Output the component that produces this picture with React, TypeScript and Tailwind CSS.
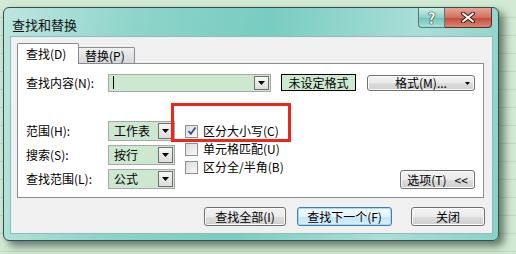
import React from 'react'

const Caret = () => (
  <svg width="7" height="4" viewBox="0 0 7 4">
    <path d="M0 0h7L3.5 4z" fill="#000" />
  </svg>
)

function Combo({ value, className }: { value: string; className: string }) {
  return (
    <div className={`flex h-[20px] border border-[#a8a8a8] bg-[#cce8cf] ${className}`}>
      <div className="flex-1 flex items-center pl-[5px] text-[12px] leading-none text-black">{value}</div>
      <div className="w-[15px] my-[1px] mr-[1px] border border-[#707070] bg-[linear-gradient(to_bottom,#f7f7f7,#dcdcdc)] flex items-center justify-center">
        <Caret />
      </div>
    </div>
  )
}

function Check({ label, checked }: { label: string; checked?: boolean }) {
  return (
    <div className="flex items-center h-[18px] gap-[5px]">
      <div className="w-[13px] h-[13px] border border-[#8f8f8f] bg-[linear-gradient(135deg,#dcdcdc,#f8f8f8)] flex items-center justify-center">
        {checked && (
          <svg width="10" height="10" viewBox="0 0 10 10">
            <path d="M1.5 5.2 L3.8 7.8 L8.5 1.5" stroke="#3a4f9a" strokeWidth="1.8" fill="none" />
          </svg>
        )}
      </div>
      <span className="text-[12px] leading-none text-black">{label}</span>
    </div>
  )
}

function Button({ label, className, focus }: { label: React.ReactNode; className: string; focus?: boolean }) {
  return (
    <div
      className={`flex items-center justify-center rounded-[3px] border text-[12px] leading-none text-black ${
        focus
          ? 'border-[#3c7fb1] shadow-[inset_0_0_0_1px_#a6dcf5] bg-[linear-gradient(to_bottom,#f4fafd_0%,#e5f3fb_50%,#c4e5f6_51%,#d8eef9_100%)]'
          : 'border-[#707070] shadow-[inset_0_0_0_1px_#fcfcfc] bg-[linear-gradient(to_bottom,#f2f2f2_0%,#ebebeb_50%,#dddddd_51%,#cfcfcf_100%)]'
      } ${className}`}
    >
      {label}
    </div>
  )
}

export default function App() {
  return (
    <div className="w-[516px] h-[254px] overflow-hidden pl-[3px] pt-[7px] bg-[repeating-linear-gradient(to_bottom,#d2e9d3_0px,#d2e9d3_17px,#bcd8be_17px,#bcd8be_18px)] font-['Noto_Sans_CJK_SC',sans-serif]">
      <div className="w-[496px] h-[234px] rounded-[6px] border border-[#34504c] shadow-[5px_5px_8px_rgba(20,40,30,0.6)] bg-[linear-gradient(100deg,#bde6e0_0%,#8ed4ca_25%,#78ccc1_50%,#a9ded7_78%,#88d2c8_100%)] flex flex-col">
        {/* title bar */}
        <div className="h-[28px] flex items-start shrink-0">
          <div className="pl-[8px] pt-[10px] text-[13px] leading-none text-[#111]">查找和替换</div>
          <div className="ml-auto mr-[6px] flex">
            <div className="w-[27px] h-[20px] rounded-bl-[4px] border border-t-0 border-[#4f7a75] bg-[linear-gradient(to_bottom,#cdeee9,#8fd1c8_50%,#6fc3b8_51%,#a6e0d8)] flex items-center justify-center">
              <span className="text-[15px] font-bold leading-none text-white [text-shadow:0_0_1px_#222,0_0_1px_#222,0_0_1px_#222]">?</span>
            </div>
            <div className="w-[47px] h-[20px] rounded-br-[4px] border border-l-0 border-t-0 border-[#5e2a24] bg-[linear-gradient(to_bottom,#e8a597,#d2705f_50%,#c24a36_51%,#d98676)] flex items-center justify-center">
              <svg width="14" height="11" viewBox="0 0 14 11">
                <path d="M2 1.5 L12 9.5 M12 1.5 L2 9.5" stroke="#3b1a16" strokeWidth="4" strokeLinecap="round" />
                <path d="M2 1.5 L12 9.5 M12 1.5 L2 9.5" stroke="#fff" strokeWidth="2" strokeLinecap="round" />
              </svg>
            </div>
          </div>
        </div>

        {/* client area */}
        <div className="flex-1 ml-[6px] mr-[5px] mb-[6px] border border-[#8cbcb6] bg-[#f0f0f0] flex flex-col px-[6px] pt-[6px]">
          {/* tabs */}
          <div className="flex items-end h-[20px] relative z-10">
            <div className="w-[62px] h-[21px] -mb-px border border-b-0 border-[#898c95] rounded-t-[2px] bg-white flex items-center pl-[8px] text-[12px] leading-none text-black">
              查找(D)
            </div>
            <div className="w-[56px] h-[16px] border border-l-0 border-b-0 border-[#898c95] rounded-tr-[2px] bg-[linear-gradient(to_bottom,#f0f0f0,#d8d8d8)] flex items-center pl-[6px] text-[12px] leading-none text-black">
              替换(P)
            </div>
          </div>

          {/* panel */}
          <div className="relative h-[135px] w-[467px] border border-[#898c95] bg-white pl-[8px] pr-[8px] pt-[10px]">
            <div className="flex items-center h-[17px]">
              <span className="w-[82px] text-[12px] leading-none text-black">查找内容(N):</span>
              <div className="flex w-[163px] h-[18px] border border-[#a8a8a8] bg-[#cce8cf]">
                <div className="flex-1 flex items-center pl-[4px]">
                  <div className="w-px h-[13px] bg-black" />
                </div>
                <div className="w-[15px] my-[1px] mr-[1px] border border-[#707070] bg-[linear-gradient(to_bottom,#f7f7f7,#dcdcdc)] flex items-center justify-center">
                  <Caret />
                </div>
              </div>
              <div className="ml-[10px] w-[75px] h-[17px] border border-black bg-[#cce8cf] flex items-center justify-center text-[12px] leading-none text-black">
                未设定格式
              </div>
              <Button
                className="ml-[11px] w-[108px] h-[16px] relative"
                label={
                  <>
                    <span>格式(M)...</span>
                    <span className="absolute right-[4px] top-[6px]">
                      <svg width="5" height="3" viewBox="0 0 5 3"><path d="M0 0h5L2.5 3z" fill="#000" /></svg>
                    </span>
                  </>
                }
              />
            </div>

            <div className="flex mt-[30px]">
              <div className="flex flex-col gap-[4px]">
                <div className="flex items-center">
                  <span className="w-[82px] text-[12px] leading-none text-black">范围(H):</span>
                  <Combo value="工作表" className="w-[67px]" />
                </div>
                <div className="flex items-center">
                  <span className="w-[82px] text-[12px] leading-none text-black">搜索(S):</span>
                  <Combo value="按行" className="w-[67px]" />
                </div>
                <div className="flex items-center">
                  <span className="w-[82px] text-[12px] leading-none text-black">查找范围(L):</span>
                  <Combo value="公式" className="w-[67px]" />
                </div>
              </div>
              <div className="ml-[10px] pt-[1px] flex flex-col">
                <Check label="区分大小写(C)" checked />
                <Check label="单元格匹配(U)" />
                <Check label="区分全/半角(B)" />
              </div>
              <div className="ml-auto flex items-end">
                <Button className="w-[75px] h-[19px] gap-[8px]" label={<><span>选项(T)</span><span>&lt;&lt;</span></>} />
              </div>
            </div>

            {/* annotation */}
            <div className="absolute left-[153px] top-[39px] w-[120px] h-[39px] border-[3px] border-[#f0261a]" />
          </div>

          {/* bottom buttons */}
          <div className="flex justify-end mt-[9px] pr-[1px]">
            <Button className="w-[82px] h-[19px]" label="查找全部(I)" />
            <Button className="ml-[11px] w-[95px] h-[19px]" label="查找下一个(F)" focus />
            <Button className="ml-[19px] w-[74px] h-[19px]" label="关闭" />
          </div>
        </div>
      </div>
    </div>
  )
}
